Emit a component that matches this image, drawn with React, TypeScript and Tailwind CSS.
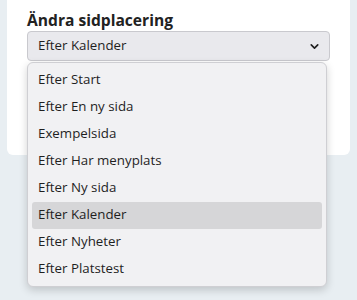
import { ChevronDown } from 'lucide-react';

const options = [
  'Efter Start',
  'Efter En ny sida',
  'Exempelsida',
  'Efter Har menyplats',
  'Efter Ny sida',
  'Efter Kalender',
  'Efter Nyheter',
  'Efter Platstest',
];

export default function App() {
  return (
    <div className="relative h-[300px] w-[357px] overflow-hidden bg-[#e8eef2] font-['Open_Sans',sans-serif] text-[#1f1f1f]">
      {/* Card */}
      <div className="mx-[7px] h-[155px] rounded-b-[6px] bg-white px-5 pt-[10px]">
        <h2 className="text-[15.6px] font-bold leading-[20px] text-[#222]">Ändra sidplacering</h2>
        <div className="mt-[1px] flex h-[30px] items-center justify-between rounded-[4px] border border-[#c9c9ce] bg-[#e9e9ed] pl-[10px] pr-[8px] text-[13.3px]">
          <span>Efter Kalender</span>
          <ChevronDown size={13} strokeWidth={3} />
        </div>
      </div>

      {/* Dropdown list */}
      <div className="absolute left-[27px] top-[62px] w-[300px] rounded-[6px] border border-[#cfcfd3] bg-[#f1f1f3] px-[4px] py-[3.5px] shadow-[0_3px_8px_rgba(0,0,0,0.18)]">
        {options.map((o) => (
          <div
            key={o}
            className={`flex h-[27px] items-center rounded-[3px] pl-[6px] text-[13.3px] ${
              o === 'Efter Kalender' ? 'bg-[#d6d6d8]' : ''
            }`}
          >
            {o}
          </div>
        ))}
      </div>
    </div>
  );
}
